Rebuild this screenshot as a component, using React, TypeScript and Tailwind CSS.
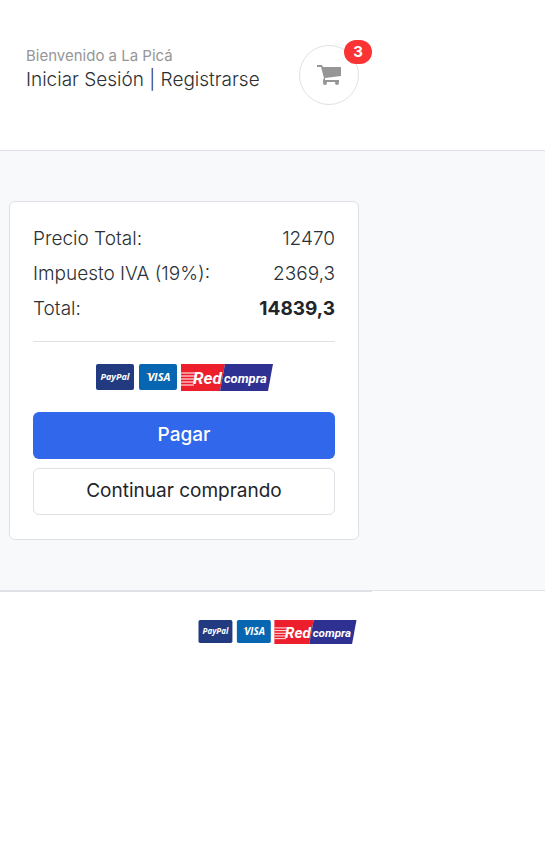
import React from "react";

const summary = [
  { label: "Precio Total:", value: "12470", strong: false },
  { label: "Impuesto IVA (19%):", value: "2369,3", strong: false },
  { label: "Total:", value: "14839,3", strong: true },
];

function PaymentLogos({ className }: { className: string }) {
  return (
    <svg viewBox="0 0 177 28" className={className} role="img" aria-label="PayPal, Visa, Redcompra">
      <rect x="0" y="1" width="38" height="26" rx="2" fill="#213a80" />
      <text x="19" y="17" textAnchor="middle" fontSize="9" fontWeight="700" fontStyle="italic" fill="#fff" fontFamily="'Open Sans', sans-serif">PayPal</text>
      <rect x="43" y="1" width="38" height="26" rx="2" fill="#0666b2" />
      <path d="M50 10h4l1 4z" fill="#e9a04a" />
      <text x="63" y="18" textAnchor="middle" fontSize="11" fontWeight="700" fontStyle="italic" fill="#fff" fontFamily="'Open Sans', sans-serif">VISA</text>
      <path d="M85 1h44l-5 27H85z" fill="#ed1f2d" />
      <path d="M129 1h48l-5 27h-48z" fill="#2e3192" />
      <path d="M85 10h16M85 13h15M85 16h14M85 19h13M85 22h13" stroke="#fff" strokeWidth="1" />
      <text x="97" y="21" fontSize="17" fontWeight="700" fontStyle="italic" fill="#fff" fontFamily="Roboto, sans-serif">Red</text>
      <text x="128" y="20" fontSize="13" fontWeight="700" fontStyle="italic" fill="#fff" fontFamily="Roboto, sans-serif">compra</text>
    </svg>
  );
}

function CartIcon() {
  return (
    <svg viewBox="0 0 24 22" className="h-[22px] w-6" fill="#969696" aria-hidden="true">
      <path d="M0 1h5l1 2h18v9L8 14v2h14v2H6v-2l1-2L4 3H0z" />
      <circle cx="8" cy="19" r="2" />
      <circle cx="20" cy="19" r="2" />
    </svg>
  );
}

export default function App() {
  return (
    <div className="min-h-screen bg-white font-['Inter',sans-serif] text-[19px] font-[350] text-[#2b3034]">
      <header className="border-b border-[#dee2e6]">
        <div className="flex max-w-[359px] items-start justify-between py-[45px] pl-[26px]">
          <div>
            <p className="text-[15px] leading-[22px] font-normal text-[#969696]">Bienvenido a La Picá</p>
            <p className="leading-[26px]">
              <a href="#login">Iniciar Sesión</a> <span>|</span> <a href="#register">Registrarse</a>
            </p>
          </div>
          <a href="#cart" aria-label="Carrito" className="relative flex size-[60px] items-center justify-center rounded-full border border-[#dee2e6]">
            <CartIcon />
            <span className="absolute -top-[6px] -right-[14px] flex h-6 w-7 items-center justify-center rounded-full bg-[#fa3434] text-[15px] font-bold text-white">3</span>
          </a>
        </div>
      </header>

      <main className="bg-[#f8f9fa] py-[50px] pl-[9px]">
        <section className="max-w-[350px] rounded-md border border-[#dee2e6] bg-white px-[23px] pt-[23px] pb-6">
          <dl className="space-y-[7px] leading-7">
            {summary.map((row) => (
              <div key={row.label} className="flex justify-between">
                <dt>{row.label}</dt>
                <dd className={row.strong ? "font-bold text-[#212529]" : ""}>{row.value}</dd>
              </div>
            ))}
          </dl>
          <hr className="mt-[18px] mb-[21px] border-[#dee2e6]" />
          <PaymentLogos className="mx-auto h-7 w-[177px]" />
          <button type="button" className="mt-[21px] h-[47px] w-full rounded-md bg-[#3167eb] font-medium text-white">Pagar</button>
          <button type="button" className="mt-[9px] h-[47px] w-full rounded-md border border-[#dee2e6] bg-white font-normal text-[#212529]">Continuar comprando</button>
        </section>
      </main>

      <footer className="border-t border-[#dee2e6]">
        <div className="flex max-w-[372px] justify-end border-t border-[#dee2e6] pt-[27px] pr-[15px]">
          <PaymentLogos className="h-[25px] w-[159px]" />
        </div>
      </footer>
    </div>
  );
}
